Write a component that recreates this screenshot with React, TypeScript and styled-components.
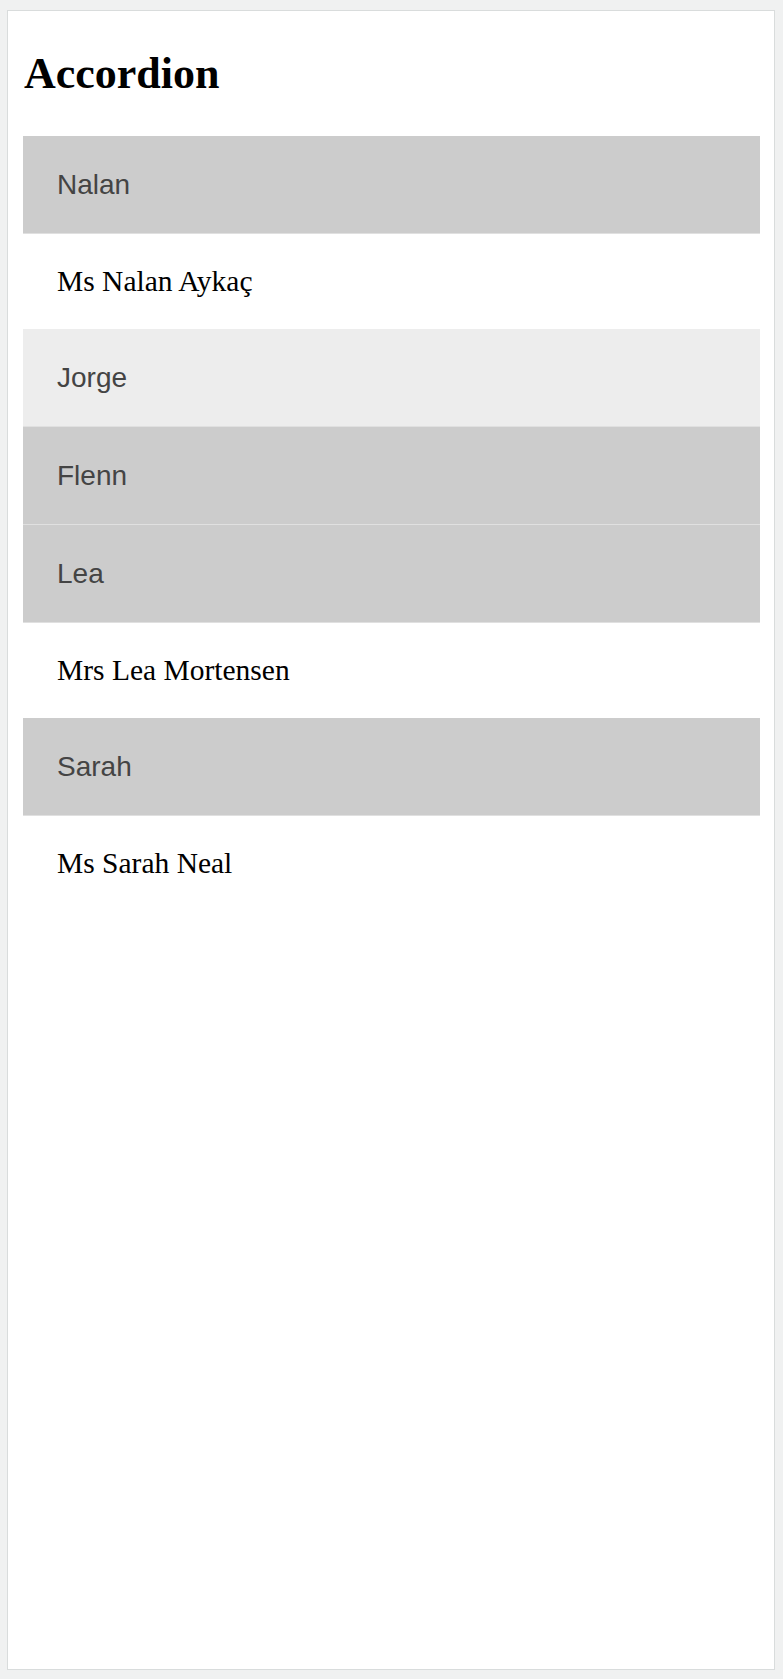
import React from "react";
import styled, { createGlobalStyle } from "styled-components";

const Global = createGlobalStyle`
  html, body {
    margin: 0;
    padding: 0;
    background: #f0f1f1;
  }
  body {
    padding: 10px 8px 9px 7px;
  }
`;

const Panel = styled.div`
  box-sizing: border-box;
  height: 1660px;
  background: #ffffff;
  border: 1px solid #d9dcdc;
  padding: 38px 14px 0 15px;
`;

const Title = styled.h1`
  margin: 0 0 38px 1px;
  font-family: "Liberation Serif", "Times New Roman", serif;
  font-weight: bold;
  font-size: 44px;
  line-height: 49px;
  color: #000;
`;

const List = styled.div`
  display: flex;
  flex-direction: column;
`;

const Header = styled.button<{ $hover?: boolean }>`
  box-sizing: border-box;
  display: flex;
  align-items: center;
  width: 100%;
  height: 98px;
  margin: 0;
  padding: 0 0 0 34px;
  border: none;
  border-bottom: 1px solid #e0e0e0;
  background: ${(p) => (p.$hover ? "#ededed" : "#cccccc")};
  color: #444444;
  font-family: "Liberation Sans", Arial, sans-serif;
  font-size: 28px;
  text-align: left;
  cursor: pointer;
`;

const Body = styled.div`
  box-sizing: border-box;
  display: flex;
  align-items: center;
  height: 95px;
  padding: 0 0 0 34px;
  background: #ffffff;
  color: #000000;
  font-family: "Liberation Serif", "Times New Roman", serif;
  font-size: 29.5px;
`;

const items = [
  { name: "Nalan", full: "Ms Nalan Aykaç", open: true },
  { name: "Jorge", full: "Mr Jorge Ortiz", open: false, hover: true },
  { name: "Flenn", full: "Mr Flenn Hansen", open: false },
  { name: "Lea", full: "Mrs Lea Mortensen", open: true },
  { name: "Sarah", full: "Ms Sarah Neal", open: true },
];

export default function App() {
  return (
    <>
      <Global />
      <Panel>
        <Title>Accordion</Title>
        <List>
          {items.map((it) => (
            <React.Fragment key={it.name}>
              <Header $hover={it.hover}>{it.name}</Header>
              {it.open && <Body>{it.full}</Body>}
            </React.Fragment>
          ))}
        </List>
      </Panel>
    </>
  );
}
